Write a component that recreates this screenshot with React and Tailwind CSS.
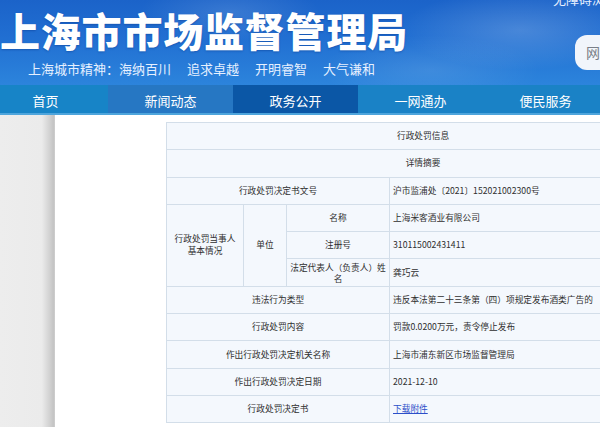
const rows = [
  { label: "违法行为类型", value: "违反本法第二十三条第（四）项规定发布酒类广告的" },
  { label: "行政处罚内容", value: "罚款0.0200万元，责令停止发布" },
  { label: "作出行政处罚决定机关名称", value: "上海市浦东新区市场监督管理局" },
  { label: "作出行政处罚决定日期", value: "2021-12-10" },
];

const navItems = [
  { name: "首页", bg: "bg-[#1784c7]" },
  { name: "新闻动态", bg: "bg-[#2677c3]" },
  { name: "政务公开", bg: "bg-[#0b57a6]" },
  { name: "一网通办", bg: "bg-[#1a82c6]" },
  { name: "便民服务", bg: "bg-[#1a82c6]" },
];

const td = "border border-[#d3dee9] h-[27.3px] p-0";

export default function App() {
  return (
    <div className="w-[600px] h-[427px] overflow-hidden bg-white font-['Noto_Sans_CJK_SC','Noto_Sans',sans-serif]">
      {/* header */}
      <header className="relative h-[85px] overflow-hidden bg-[linear-gradient(180deg,#1b63c9_0%,#216fd2_45%,#2c84dc_100%)]">
        <div className="absolute inset-0 bg-[radial-gradient(ellipse_120px_40px_at_520px_30px,rgba(255,255,255,0.18),transparent),radial-gradient(ellipse_90px_30px_at_230px_12px,rgba(255,255,255,0.12),transparent),radial-gradient(ellipse_110px_35px_at_430px_70px,rgba(255,255,255,0.1),transparent)]" />
        <div className="relative">
          <h1 className="pt-[10px] text-[40px] leading-[40px] font-black tracking-[0.8px] text-white [text-shadow:0_1px_2px_rgba(0,40,120,0.35)]">
            上海市市场监督管理局
          </h1>
          <div className="mt-[11px] ml-[28px] flex gap-[16px] text-[13px] leading-[16px] text-[#e6f0ff]">
            <span>上海城市精神：海纳百川</span>
            <span>追求卓越</span>
            <span>开明睿智</span>
            <span>大气谦和</span>
          </div>
        </div>
        <div className="absolute left-[553px] top-[-9px] whitespace-nowrap text-[13px] leading-[16px] text-[#e8f0ff]">
          无障碍浏览
        </div>
        <div className="absolute left-[575px] top-[35px] h-[35px] w-[120px] rounded-[12px] bg-[#f1f5fb] pl-[11px] text-[14px] leading-[35px] text-[#7a7f88] whitespace-nowrap">
          网站搜索
        </div>
      </header>

      {/* nav */}
      <nav className="h-[28px] flex ml-[-17px]">
        {navItems.map((n) => (
          <div
            key={n.name}
            className={`${n.bg} w-[125px] shrink-0 text-center text-[13px] leading-[28px] pt-[2px] text-white`}
          >
            {n.name}
          </div>
        ))}
      </nav>
      <div className="h-[2px] bg-[#4ea5dc]" />

      {/* body */}
      <div className="flex h-[312px]">
        <div className="w-[55px] shrink-0 bg-[linear-gradient(to_right,#ededed_0%,#ebebeb_76%,#d2d2d2_90%,#c4c4c4_97%,#cfcfcf_100%)]" />
        <div className="pl-[111px] pt-[7px]">
          <table className="table-fixed border-collapse w-[514px] bg-[#f4f8fd] text-[8.7px] leading-[12px] text-[#2f2f2f]">
            <colgroup>
              <col className="w-[77px]" />
              <col className="w-[43px]" />
              <col className="w-[103px]" />
              <col />
            </colgroup>
            <tbody>
              <tr>
                <td colSpan={4} className={`${td} text-center`}>行政处罚信息</td>
              </tr>
              <tr>
                <td colSpan={4} className={`${td} text-center`}>详情摘要</td>
              </tr>
              <tr>
                <td colSpan={3} className={`${td} text-center`}>行政处罚决定书文号</td>
                <td className={`${td} pl-[3px]`}>沪市监浦处〔2021〕152021002300号</td>
              </tr>
              <tr>
                <td rowSpan={3} className={`${td} text-center`}>
                  行政处罚当事人
                  <br />
                  基本情况
                </td>
                <td rowSpan={3} className={`${td} text-center`}>单位</td>
                <td className={`${td} text-center`}>名称</td>
                <td className={`${td} pl-[3px]`}>上海米客酒业有限公司</td>
              </tr>
              <tr>
                <td className={`${td} text-center`}>注册号</td>
                <td className={`${td} pl-[3px]`}>310115002431411</td>
              </tr>
              <tr>
                <td className={`${td} text-center px-[1px] leading-[11px]`}>
                  法定代表人（负责人）姓名
                </td>
                <td className={`${td} pl-[3px]`}>龚巧云</td>
              </tr>
              {rows.map((r) => (
                <tr key={r.label}>
                  <td colSpan={3} className={`${td} text-center`}>{r.label}</td>
                  <td className={`${td} pl-[3px]`}>{r.value}</td>
                </tr>
              ))}
              <tr>
                <td colSpan={3} className={`${td} text-center`}>行政处罚决定书</td>
                <td className={`${td} pl-[3px]`}>
                  <a href="#" className="text-[#2b4fc9] underline">下载附件</a>
                </td>
              </tr>
            </tbody>
          </table>
        </div>
      </div>
    </div>
  );
}
